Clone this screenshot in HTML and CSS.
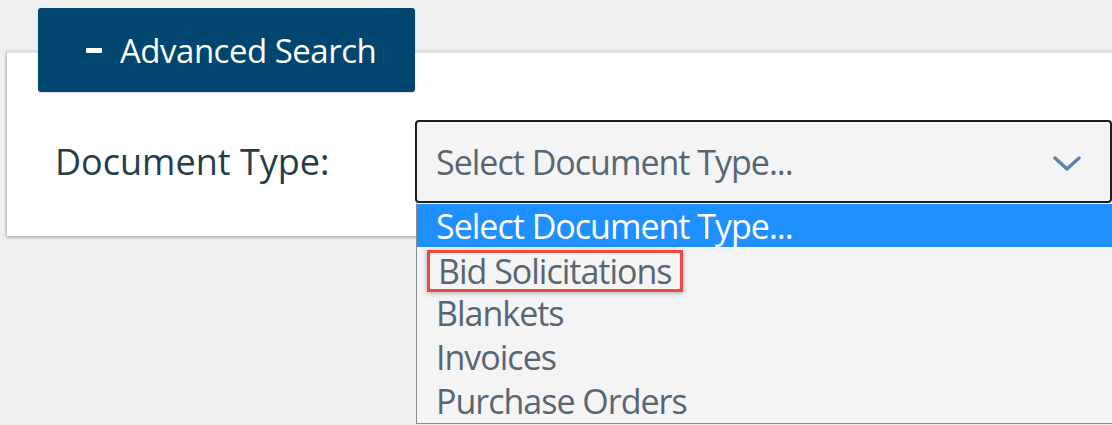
FILE: index.html
```html
<!DOCTYPE html>
<html lang="en">
<head>
  <meta charset="UTF-8" />
  <meta name="viewport" content="width=device-width, initial-scale=1.0"/>
  <title>Advanced Search</title>
  <link rel="stylesheet" href="styles.css">
</head>
<body>
  <div class="search">
    <button class="toggle">
      <span class="minus"></span>
      Advanced Search
    </button>

    <div class="panel">
      <div class="field">
        <label class="field-label">Document Type:</label>
        <div class="select-wrap">
          <div class="select">
            <span>Select Document Type...</span>
            <svg class="chevron" width="28" height="16" viewBox="0 0 28 16">
              <polyline points="2,2 14,13 26,2" fill="none" stroke="#5b83af" stroke-width="3.4" stroke-linecap="round" stroke-linejoin="round"/>
            </svg>
          </div>
          <ul class="options">
            <li class="selected">Select Document Type...</li>
            <li><span class="callout">Bid Solicitations</span></li>
            <li>Blankets</li>
            <li>Invoices</li>
            <li>Purchase Orders</li>
          </ul>
        </div>
      </div>
    </div>
  </div>
</body>
</html>
```

FILE: styles.css
```css
html, body {
  height: 100%;
}

body {
  margin: 0;
  min-height: 425px;
  font-family: 'Open Sans', 'Liberation Sans', sans-serif;
  background-color: #efefef;
}

.search {
  min-height: 425px;
  box-sizing: border-box;
  padding: 8px 0 0 7px;
}

.toggle {
  position: relative;
  z-index: 2;
  display: flex;
  align-items: center;
  gap: 18px;
  margin-left: 31px;
  width: 377px;
  height: 84px;
  padding: 0 0 0 48px;
  border: none;
  border-radius: 3px;
  background-color: #00466e;
  color: #ffffff;
  font-family: inherit;
  font-size: 33px;
  letter-spacing: -0.5px;
  box-shadow: 0 1px 2px rgba(0,0,0,0.15);
}

.minus {
  display: block;
  width: 16px;
  height: 5px;
  border-radius: 1px;
  background-color: #ffffff;
}

.panel {
  margin-top: -41px;
  height: 185px;
  box-sizing: border-box;
  padding: 67px 0 0 48px;
  background-color: #ffffff;
  border-top: 2px solid #e2e2e4;
  box-shadow: 0 2px 3px rgba(120,120,140,0.45), -1px 0 2px rgba(120,120,140,0.35);
}

.field {
  display: flex;
  align-items: flex-start;
}

.field-label {
  width: 360px;
  flex-shrink: 0;
  line-height: 83px;
  font-size: 36px;
  color: #263c4c;
}

.select-wrap {
  position: relative;
  flex: 1;
}

.select {
  display: flex;
  align-items: center;
  justify-content: space-between;
  height: 83px;
  box-sizing: border-box;
  padding: 0 29px 0 19px;
  border: 2px solid #1e1e1e;
  border-radius: 4px;
  background-color: #f4f4f4;
  font-size: 34px;
  letter-spacing: -1px;
  color: #586673;
}

.chevron {
  margin-top: 4px;
}

.options {
  position: absolute;
  z-index: 3;
  top: 83px;
  left: 1px;
  right: -1px;
  margin: 0;
  padding: 0;
  list-style: none;
  background-color: #f4f4f4;
  border: 1px solid #8d8d8d;
  border-top: none;
  font-size: 34px;
  letter-spacing: -1px;
  color: #586673;
}

.options li {
  display: flex;
  align-items: center;
  height: 44px;
  padding-left: 19px;
}

.options li.selected {
  margin-top: 1px;
  height: 43px;
  background-color: #1e90ff;
  color: #ffffff;
}

.callout {
  margin-left: -9px;
  margin-top: 3px;
  padding: 0 8px;
  line-height: 36px;
  border: 3px solid #f24646;
  box-shadow: 0 1px 5px rgba(0,0,0,0.3);
}
```
